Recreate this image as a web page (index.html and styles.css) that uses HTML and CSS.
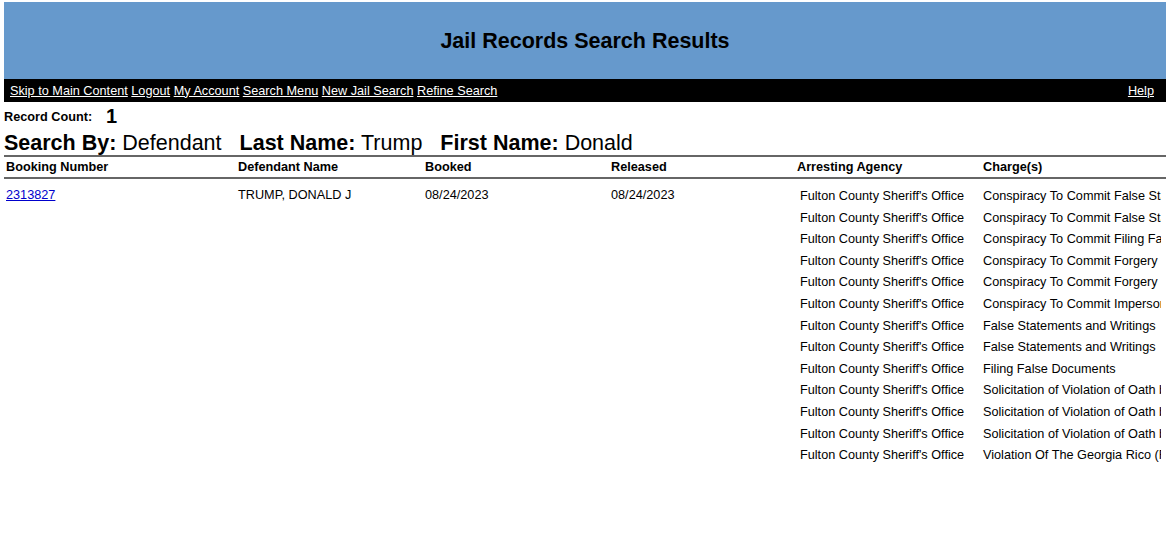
FILE: index.html
```html
<!DOCTYPE html>
<html lang="en">
<head>
<meta charset="utf-8">
<title>Jail Records Search Results</title>
<link rel="stylesheet" href="styles.css">
</head>
<body>
<header class="banner">
  <h1 class="title">Jail Records Search Results</h1>
</header>
<nav class="navbar">
  <div class="nav-left">
    <a href="#main">Skip to Main Content</a> <a href="#">Logout</a> <a href="#">My Account</a> <a href="#">Search Menu</a> <a href="#">New Jail Search</a> <a href="#">Refine Search</a>
  </div>
  <div class="nav-right"><a href="#">Help</a></div>
</nav>
<main id="main">
  <div class="record-count"><span class="rc-label">Record Count:</span><span class="rc-value">1</span></div>
  <div class="search-by">
    <span class="crit"><b>Search By:</b> Defendant</span>
    <span class="crit"><b>Last Name:</b> Trump</span>
    <span class="crit"><b>First Name:</b> Donald</span>
  </div>
  <table class="results">
    <colgroup>
      <col class="c1"><col class="c2"><col class="c3"><col class="c4"><col class="c5"><col class="c6">
    </colgroup>
    <thead>
      <tr>
        <th>Booking Number</th>
        <th>Defendant Name</th>
        <th>Booked</th>
        <th>Released</th>
        <th>Arresting Agency</th>
        <th>Charge(s)</th>
      </tr>
    </thead>
    <tbody>
      <tr>
        <td><a href="#">2313827</a></td>
        <td>TRUMP, DONALD J</td>
        <td>08/24/2023</td>
        <td>08/24/2023</td>
        <td class="nested-cell" colspan="2">
          <table class="charges">
            <colgroup><col class="ca"><col class="cb"></colgroup>
            <tr><td>Fulton County Sheriff's Office</td><td>Conspiracy To Commit False Statements and Writings</td></tr>
            <tr><td>Fulton County Sheriff's Office</td><td>Conspiracy To Commit False Statements and Writings</td></tr>
            <tr><td>Fulton County Sheriff's Office</td><td>Conspiracy To Commit Filing False Documents</td></tr>
            <tr><td>Fulton County Sheriff's Office</td><td>Conspiracy To Commit Forgery in the First Degree</td></tr>
            <tr><td>Fulton County Sheriff's Office</td><td>Conspiracy To Commit Forgery in the First Degree</td></tr>
            <tr><td>Fulton County Sheriff's Office</td><td>Conspiracy To Commit Impersonating a Public Officer</td></tr>
            <tr><td>Fulton County Sheriff's Office</td><td>False Statements and Writings</td></tr>
            <tr><td>Fulton County Sheriff's Office</td><td>False Statements and Writings</td></tr>
            <tr><td>Fulton County Sheriff's Office</td><td>Filing False Documents</td></tr>
            <tr><td>Fulton County Sheriff's Office</td><td>Solicitation of Violation of Oath by Public Officer</td></tr>
            <tr><td>Fulton County Sheriff's Office</td><td>Solicitation of Violation of Oath by Public Officer</td></tr>
            <tr><td>Fulton County Sheriff's Office</td><td>Solicitation of Violation of Oath by Public Officer</td></tr>
            <tr><td>Fulton County Sheriff's Office</td><td>Violation Of The Georgia Rico (Racketeer Influenced and Corrupt Organizations) Act</td></tr>
          </table>
        </td>
      </tr>
    </tbody>
  </table>
</main>
</body>
</html>
```
FILE: styles.css
```css
html, body {
  margin: 0;
  padding: 0;
  background: #ffffff;
}
body {
  padding: 2px 3px 0 4px;
  font-family: "Liberation Sans", Arial, sans-serif;
  font-size: 12.7px;
  color: #000000;
}
.banner {
  height: 77px;
  background: #6699cc;
  display: flex;
  align-items: center;
  justify-content: center;
}
.title {
  margin: 0;
  font-size: 21.5px;
  font-weight: bold;
  line-height: 1;
  padding-top: 2px;
}
.navbar {
  height: 23px;
  background: #000000;
  display: flex;
  align-items: center;
  justify-content: space-between;
  padding: 0 12px 0 6px;
  font-size: 12.7px;
}
.navbar a {
  color: #ffffff;
  text-decoration: underline;
}
.record-count {
  height: 29px;
  display: flex;
  align-items: center;
}
.rc-label {
  font-weight: bold;
  font-size: 12.7px;
}
.rc-value {
  font-weight: bold;
  font-size: 20px;
  margin-left: 14px;
}
.search-by {
  height: 24px;
  display: flex;
  align-items: center;
  gap: 18px;
  font-size: 21.5px;
}
.results {
  width: 1162px;
  border-collapse: collapse;
  table-layout: fixed;
  border-top: 2px solid #666666;
}
.c1 { width: 232px; }
.c2 { width: 187px; }
.c3 { width: 186px; }
.c4 { width: 186px; }
.c5 { width: 186px; }
.c6 { width: 185px; }
.results th {
  text-align: left;
  font-weight: bold;
  font-size: 12.7px;
  line-height: 16px;
  padding: 2px 2px;
  border-bottom: 2px solid #666666;
  white-space: nowrap;
}
.results td {
  vertical-align: top;
  padding: 9px 2px 0;
  line-height: 15.6px;
  white-space: nowrap;
}
.results a {
  color: #0000cc;
  text-decoration: underline;
}
.results td.nested-cell {
  padding: 7px 0 0;
}
.charges {
  width: 366px;
  border-collapse: collapse;
  table-layout: fixed;
}
.ca { width: 186px; }
.cb { width: 180px; }
.charges td {
  padding: 3px 0 3px 5px;
  line-height: 15.6px;
  white-space: nowrap;
  overflow: hidden;
}
.charges td + td {
  padding-left: 2px;
}
```
